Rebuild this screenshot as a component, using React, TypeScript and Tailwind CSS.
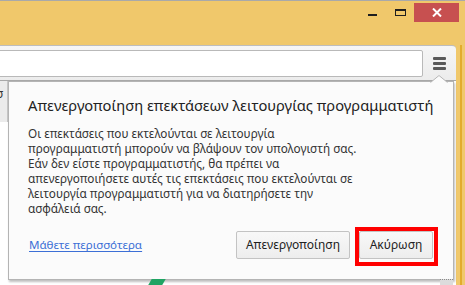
const font = { fontFamily: '"Noto Sans", "Open Sans", sans-serif' };

const bodyLines = [
  'Οι επεκτάσεις που εκτελούνται σε λειτουργία',
  'προγραμματιστή μπορούν να βλάψουν τον υπολογιστή σας.',
  'Εάν δεν είστε προγραμματιστής, θα πρέπει να',
  'απενεργοποιήσετε αυτές τις επεκτάσεις που εκτελούνται σε',
  'λειτουργία προγραμματιστή για να διατηρήσετε την',
  'ασφάλειά σας.',
];

const TitleBar = () => (
  <div className="flex h-[45px] shrink-0 items-start justify-end border-t border-[#a9a9a9] pr-[6px]">
    <div className="mt-[13px] mr-[18px] h-[2px] w-[9px] bg-[#1e1e1e]" />
    <div className="mt-[8px] mr-[8px] h-[7px] w-[11px] border border-t-2 border-[#1e1e1e]" />
    <div className="mt-[2px] flex h-[19px] w-[45px] items-center justify-center bg-[#c75050]">
      <svg width="10" height="9" viewBox="0 0 10 9">
        <path d="M1 0.5 L9 8.5 M9 0.5 L1 8.5" stroke="#fff" strokeWidth="2" />
      </svg>
    </div>
  </div>
);

const Toolbar = () => (
  <div className="flex h-[35px] shrink-0 items-center rounded-tr-[4px] border-t border-[#bdbdbd] bg-gradient-to-b from-[#f6f6f6] to-[#ececec] pr-[10px]">
    <div className="ml-[-3px] h-[27px] flex-1 rounded-r-[2px] border border-[#b9b9b9] bg-white" />
    <div className="ml-[10px] flex w-[13px] flex-col gap-[2px]">
      <div className="h-[3px] rounded-[1px] bg-[#595959]" />
      <div className="h-[3px] rounded-[1px] bg-[#595959]" />
      <div className="h-[3px] rounded-[1px] bg-[#595959]" />
    </div>
  </div>
);

const Bubble = () => (
  <div
    className="absolute left-[8px] top-0 flex h-[199px] w-[446px] flex-col border border-[#b4b4b4] bg-[#fbfbfb] pt-[13px] pr-[20px] pb-[20px] pl-[19px] shadow-[1px_2px_2px_rgba(0,0,0,0.25)]"
    style={font}
  >
    <svg className="absolute -top-[7px] left-[421px]" width="18" height="8" viewBox="0 0 18 8">
      <path d="M0 8 L9 0 L18 8 Z" fill="#fbfbfb" />
      <path d="M0.5 7.5 L9 0.5 L17.5 7.5" fill="none" stroke="#b4b4b4" />
    </svg>
    <div className="whitespace-nowrap text-[14.7px] leading-[21px] text-[#222]">
      Απενεργοποίηση επεκτάσεων λειτουργίας προγραμματιστή
    </div>
    <div className="mt-[10px] text-[11.75px] leading-[15px] text-[#333]">
      {bodyLines.map((l) => (
        <div key={l} className="whitespace-nowrap">{l}</div>
      ))}
    </div>
    <div className="mt-auto flex items-center">
      <a className="ml-[1px] text-[11.6px] text-[#3c6fd6] underline underline-offset-2">Μάθετε περισσότερα</a>
      <div className="ml-auto flex gap-[9px]">
        <button className="h-[28px] w-[114px] rounded-[2px] border border-[#c3c3c3] bg-gradient-to-b from-[#f8f8f8] to-[#ededed] text-[12px] text-[#222]">
          Απενεργοποίηση
        </button>
        <div className="relative">
          <button className="h-[28px] w-[74px] rounded-[2px] border border-[#c3c3c3] bg-gradient-to-b from-[#f8f8f8] to-[#ededed] text-[12px] text-[#222]">
            Ακύρωση
          </button>
          <div className="pointer-events-none absolute -top-[4px] -left-[4px] -right-[5px] -bottom-[7px] border-4 border-[#ff0000]" />
        </div>
      </div>
    </div>
  </div>
);

export default function App() {
  return (
    <div className="relative flex h-[285px] w-[465px] flex-col overflow-hidden bg-[#f0c86b]">
      <TitleBar />
      <div className="flex flex-1">
        <div className="flex w-[456px] flex-col">
          <Toolbar />
          <div className="relative flex-1 border-t border-[#a8a8a8] bg-white">
            <div className="h-[41px] w-[8px] overflow-hidden border-r border-[#c8c8c8] bg-[#ebebeb] pt-[7px] text-[12px] leading-none text-[#333]" style={font}>
              <span className="ml-[-4px]">σ</span>
            </div>
            <Bubble />
            <div className="absolute bottom-0 left-[150px] h-[6px] w-[14px] skew-x-[-30deg] bg-[#1fa463]" />
            <div className="absolute bottom-0 left-[440px] h-[6px] w-[13px] border-t border-dotted border-[#8a8a8a] bg-[#dcdcdc]" />
          </div>
        </div>
        <div className="w-[4px]" />
        <div className="w-[2px] bg-[#e2ac2c]" />
        <div className="flex-1" />
      </div>
    </div>
  );
}
